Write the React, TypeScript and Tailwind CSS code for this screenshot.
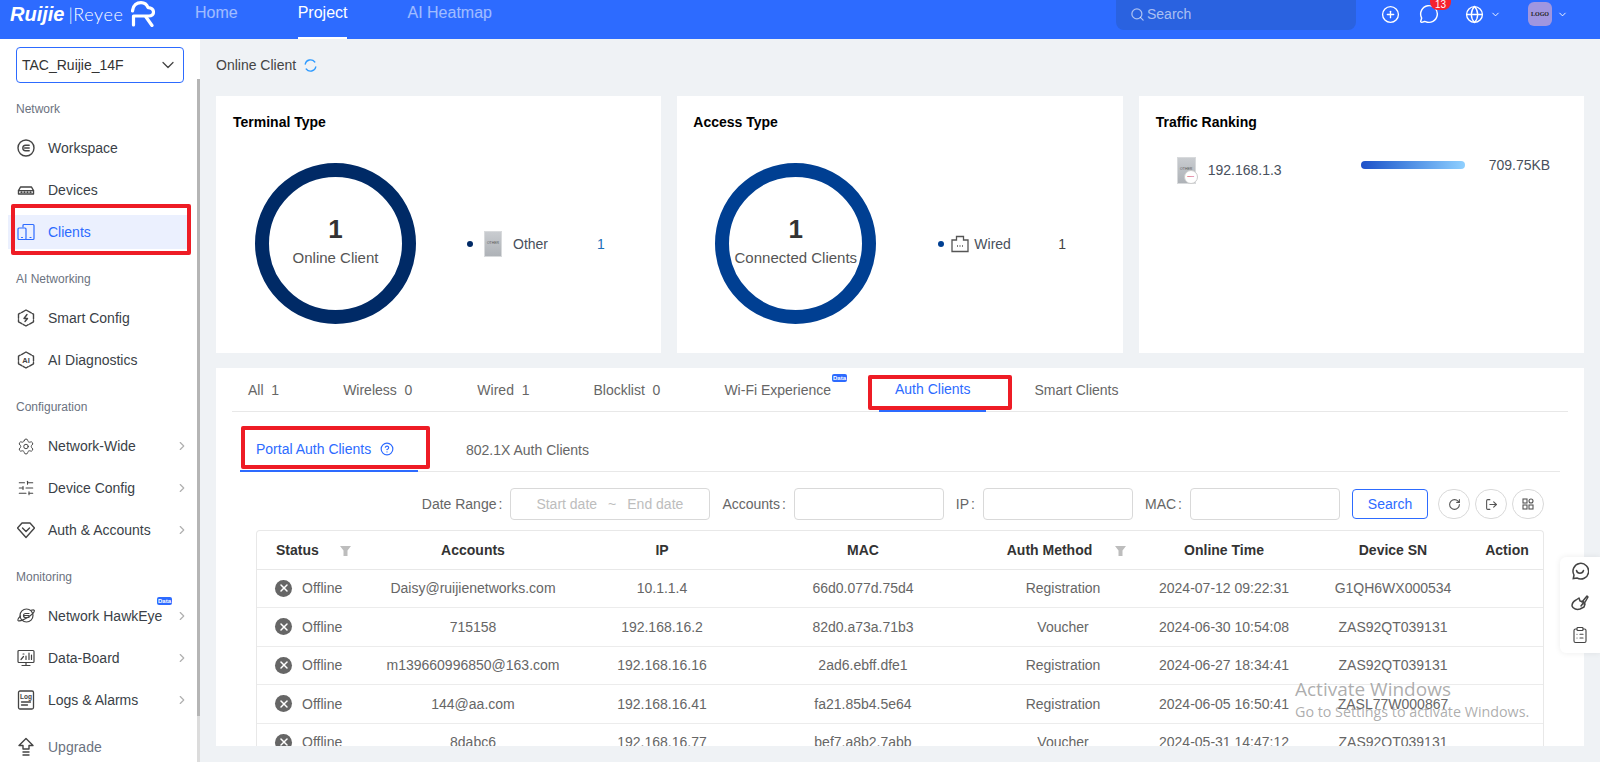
import React from "react";
import { ChevronDown, ChevronRight, CirclePlus, MessageCircle, Globe, Search, CircleHelp, Settings, SlidersHorizontal, RotateCw, LogOut, X, ClipboardList } from "lucide-react";

const stroke = { fill: "none", stroke: "currentColor", strokeWidth: 1.4, strokeLinecap: "round" as const, strokeLinejoin: "round" as const };

const IconWorkspace = () => (
  <svg width="18" height="18" viewBox="0 0 18 18" {...stroke}>
    <circle cx="9" cy="9" r="8" />
    <path d="M12.2 6.2H8.6a2.8 2.8 0 0 0 0 5.6h3.6M7.6 9h4.6" />
  </svg>
);
const IconDevices = () => (
  <svg width="18" height="18" viewBox="0 0 18 18" {...stroke}>
    <path d="M3.5 6h11l2 3.6V13H1.500V9.600z" />
    <path d="M1.500 9.600h15M4 11.300h1M7 11.300h1M10 11.300h1M13 11.300h1" />
  </svg>
);
const IconClients = () => (
  <svg width="18" height="18" viewBox="0 0 18 18" {...stroke} strokeWidth={1.2}>
    <path d="M6 4V2.500A1 1 0 0 1 7 1.500h9a1 1 0 0 1 1 1v13a1 1 0 0 1-1 1H9" />
    <rect x="1" y="5" width="8" height="11.500" rx="1" />
    <path d="M4.500 14.500h1M13 14.500h1" />
  </svg>
);
const IconSmart = () => (
  <svg width="18" height="18" viewBox="0 0 18 18" {...stroke}>
    <path d="M9 1 16.500 5.200v7.600L9 17 1.500 12.800V5.200z" strokeDasharray="6 1.400" />
    <path d="M10 5.500 7 9.500h3.500L8 12.500" />
  </svg>
);
const IconAI = () => (
  <svg width="18" height="18" viewBox="0 0 18 18" {...stroke}>
    <path d="M9 1 16.500 5.200v7.600L9 17 1.500 12.800V5.200z" strokeDasharray="6 1.400" />
    <text x="9" y="11.800" textAnchor="middle" fontSize="7.500" fontWeight="700" fill="currentColor" stroke="none" fontFamily="Liberation Sans">AI</text>
  </svg>
);
const IconAuth = () => (
  <svg width="18" height="18" viewBox="0 0 18 18" {...stroke}>
    <path d="M5 2h8l4.500 5L9 16.500.5 7z" />
    <path d="M5.500 7 9 10.500 12.500 7" />
  </svg>
);
const IconHawk = () => (
  <svg width="18" height="18" viewBox="0 0 18 18" {...stroke} strokeWidth={1.2}>
    <circle cx="9.500" cy="8.500" r="6.500" />
    <path d="M3.500 9C1.500 11 .5 12.500 1 13.300c.9 1.200 5.500-.2 10-3s7-5.800 6.200-7c-.4-.6-1.600-.6-3.200 0" />
    <path d="M12 6.500H8.500a2 2 0 0 0 0 4H12M7.500 8.500H12" />
  </svg>
);
const IconBoard = () => (
  <svg width="18" height="18" viewBox="0 0 18 18" {...stroke} strokeWidth={1.2}>
    <rect x="1" y="1.500" width="16" height="12" rx="1" />
    <path d="M9 13.500v3M5 16.500h8M4 10.500l2.500-3M6 5h1M9 10.500V7M12 10.500V4M14.500 10.500V6" />
  </svg>
);
const IconLogs = () => (
  <svg width="18" height="20" viewBox="0 0 18 20" {...stroke} strokeWidth={1.3}>
    <path d="M3 1h12a1.500 1.500 0 0 1 1.500 1.500v15A1.500 1.500 0 0 1 15 19H3a1.500 1.500 0 0 1-1.500-1.500v-15A1.500 1.500 0 0 1 3 1z" />
    <text x="9" y="9" textAnchor="middle" fontSize="6.500" fontWeight="700" fill="currentColor" stroke="none" fontFamily="Liberation Sans">Log</text>
    <path d="M4.500 12h9M4.500 15h6" />
  </svg>
);
const IconUpgrade = () => (
  <svg width="18" height="20" viewBox="0 0 18 20" {...stroke}>
    <path d="M9 1.500 16 8.500h-4V12H6V8.500H2z" />
    <path d="M6 15h6M6 18h6" />
  </svg>
);

const Sub = ({ children, className = "" }: { children: React.ReactNode; className?: string }) => (
  <div className={"h-4 leading-4 pl-4 text-xs text-[#6b7280] " + className}>{children}</div>
);

function Item({ icon, label, more, active, badge, muted }: { icon: React.ReactNode; label: string; more?: boolean; active?: boolean; badge?: boolean; muted?: boolean }) {
  return (
    <div className="h-[42px] flex items-center">
      <div className={"relative h-[34px] w-[179px] ml-2 pl-[9px] flex items-center " + (active ? "bg-[#ebf0fe] text-[#2d6bff]" : "text-[#3a3f47]")}>
        <span className={"w-[18px] flex justify-center " + (active ? "" : "text-[#444]")}>{icon}</span>
        <span className={"ml-[13px] text-sm " + (muted ? "text-[#6b7280]" : "")}>{label}</span>
        {more && <ChevronRight size={14} className="ml-auto mr-[-2px] text-[#b0b0b0]" />}
        {badge && <DataBadge className="left-[149px] top-[-2px]" />}
      </div>
    </div>
  );
}

const DataBadge = ({ className }: { className: string }) => (
  <span className={"absolute w-[15px] h-[8px] rounded-[2px] bg-[#2d6bff] text-white text-[6px] leading-[8px] font-bold text-center " + className}>Data</span>
);

const Thumb = ({ w, h, badge }: { w: string; h: string; badge?: boolean }) => (
  <div className={"relative shrink-0 bg-gradient-to-b from-[#c9ccd0] to-[#aeb2b7] border border-[#d8dadc] flex items-center justify-center " + w + " " + h}>
    <span className="text-[3.500px] leading-none text-[#555]">OTHER</span>
    {badge && (
      <span className="absolute right-[-3px] bottom-[-1px] w-[14px] h-[14px] rounded-full bg-white border border-[#ccc] flex items-center justify-center text-[2.500px] text-[#d0103a] font-bold">Ruijie</span>
    )}
  </div>
);

const Donut = ({ color, label }: { color: string; label: string }) => (
  <div className={"w-[161px] h-[161px] shrink-0 rounded-full border-[14px] flex flex-col items-center justify-center pb-2 text-[#333] " + color}>
    <div className="text-[26px] leading-[30px] font-bold">1</div>
    <div className="mt-[6px] text-[15px] leading-4 text-[#555] whitespace-nowrap">{label}</div>
  </div>
);

const Tab = ({ label, active, className = "", children }: { label: string; active?: boolean; className?: string; children?: React.ReactNode }) => (
  <div className={"relative h-[44px] px-4 flex items-center whitespace-pre text-sm " + (active ? "text-[#2d6bff] border-b-2 border-[#2d6bff] " : "text-[#666] ") + className}>
    {label}
    {children}
  </div>
);

const rows = [
  ["Daisy@ruijienetworks.com", "10.1.1.4", "66d0.077d.75d4", "Registration", "2024-07-12 09:22:31", "G1QH6WX000534"],
  ["715158", "192.168.16.2", "82d0.a73a.71b3", "Voucher", "2024-06-30 10:54:08", "ZAS92QT039131"],
  ["m139660996850@163.com", "192.168.16.16", "2ad6.ebff.dfe1", "Registration", "2024-06-27 18:34:41", "ZAS92QT039131"],
  ["144@aa.com", "192.168.16.41", "fa21.85b4.5e64", "Registration", "2024-06-05 16:50:41", "ZASL77W000867"],
  ["8dabc6", "192.168.16.77", "bef7.a8b2.7abb", "Voucher", "2024-05-31 14:47:12", "ZAS92QT039131"],
];

const Funnel = () => (
  <svg width="11" height="10" viewBox="0 0 11 10" className="inline-block">
    <path d="M0 0h11L7.500 4.500V10h-4V4.500z" fill="#bdbdbd" />
  </svg>
);

const Label = ({ text }: { text: string }) => (
  <span className="text-sm text-[#666] whitespace-pre">{text}<span className="ml-[2px]">:</span></span>
);

const Field = ({ label, w }: { label: string; w: string }) => (
  <>
    <span className="ml-3"><Label text={label} /></span>
    <div className={"ml-2 h-8 rounded border border-[#d9d9d9] bg-white " + w} />
  </>
);

const RoundBtn = ({ children, className = "ml-[5px]" }: { children: React.ReactNode; className?: string }) => (
  <div className={"w-8 h-[30px] rounded-full border border-[#d9d9d9] flex items-center justify-center text-[#555] " + className}>{children}</div>
);

export default function App() {
  return (
    <div className="relative h-[762px] w-[1600px] overflow-hidden flex flex-col bg-[#eff2f5] font-['Liberation_Sans',sans-serif]">
      <header className="h-[39px] shrink-0 bg-[#2d6bff] flex items-start text-white">
        <div className="w-[195px] h-[39px] pl-[10px] flex items-start shrink-0">
          <span className="mt-[2px] text-[20px] leading-6 font-bold italic">Ruijie</span>
          <span className="mt-[2px] ml-[4px] text-[18px] leading-6 font-light font-['Lato',sans-serif] tracking-[0.6px]">|Reyee</span>
          <svg width="24" height="26" viewBox="0 0 24 26" className="ml-[7px] mt-[1px]" fill="none" stroke="white" strokeWidth="3.200" strokeLinecap="round" strokeLinejoin="round">
            <path d="M1.500 10C2 4 6 1.600 10 1.600c3.500 0 6 2 7 5 3-.2 5.500 2 5.500 4.500S20.500 15 18 15H2.500v9" />
            <path d="M15 16l6 8.500" />
          </svg>
        </div>
        <nav className="flex gap-[60px] text-base">
          <span className="leading-[26px] text-white/55">Home</span>
          <span className="h-[39px] leading-[26px] border-b-2 border-white">Project</span>
          <span className="leading-[26px] text-white/55">AI Heatmap</span>
        </nav>
        <div className="ml-auto w-[240px] h-[30px] rounded-b-lg bg-[#2a62e0] flex items-center pl-[14px] pb-[2px] text-white/60 text-[14px]">
          <Search size={15} />
          <span className="ml-[2px]">Search</span>
        </div>
        <CirclePlus size={19} strokeWidth={1.700} className="ml-[25px] mt-[5px]" />
        <div className="relative ml-[19px] mt-[4px]">
          <MessageCircle size={20} strokeWidth={1.700} />
          <span className="absolute left-[11px] top-[-4px] w-[21px] h-[10px] rounded-b-lg bg-[#f5222d] text-[10px] leading-[9px] text-center">13</span>
        </div>
        <Globe size={19} strokeWidth={1.700} className="ml-[26px] mt-[5px]" />
        <ChevronDown size={11} className="ml-[6px] mt-[9px]" />
        <div className="ml-[27px] mt-[2px] w-6 h-6 rounded-md bg-[#a096e0] text-[#222] text-[6px] font-bold font-['Liberation_Serif',serif] flex items-center justify-center">LOGO</div>
        <ChevronDown size={11} className="ml-[5px] mt-[9px] mr-[32px]" />
      </header>

      <div className="flex-1 flex min-h-0">
        <aside className="relative w-[200px] shrink-0 bg-white overflow-hidden">
          <div className="absolute right-0 top-[40px] bottom-0 w-[3px] bg-[#dcdcdc]">
            <div className="h-[637px] bg-[#b5b5b5]" />
          </div>
          <div className="mt-2 ml-4 w-[168px] h-9 rounded border border-[#2d6bff] flex items-center pl-[5px] pr-[5px] text-sm text-[#333]">
            TAC_Ruijie_14F
            <ChevronDown size={20} strokeWidth={1.500} className="ml-auto text-[#444]" />
          </div>
          <Sub className="mt-[18px] mb-[10px]">Network</Sub>
          <Item icon={<IconWorkspace />} label="Workspace" />
          <Item icon={<IconDevices />} label="Devices" />
          <div className="relative">
            <Item icon={<IconClients />} label="Clients" active />
            <div className="absolute left-[11px] top-[-7px] w-[180px] h-[51px] border-4 border-[#ee1c25] rounded-[2px]" />
          </div>
          <Sub className="mt-[18px] mb-[10px]">AI Networking</Sub>
          <Item icon={<IconSmart />} label="Smart Config" />
          <Item icon={<IconAI />} label="AI Diagnostics" />
          <Sub className="mt-[18px] mb-[10px]">Configuration</Sub>
          <Item icon={<Settings size={21} strokeWidth={1.300} />} label="Network-Wide" more />
          <Item icon={<SlidersHorizontal size={20} strokeWidth={1.400} />} label="Device Config" more />
          <Item icon={<IconAuth />} label="Auth & Accounts" more />
          <Sub className="mt-[18px] mb-[10px]">Monitoring</Sub>
          <Item icon={<IconHawk />} label="Network HawkEye" more badge />
          <Item icon={<IconBoard />} label="Data-Board" more />
          <Item icon={<IconLogs />} label="Logs & Alarms" more />
          <div className="mt-[5px]"><Item icon={<IconUpgrade />} label="Upgrade" muted /></div>
        </aside>

        <main className="flex-1 min-w-0 px-4 flex flex-col">
          <div className="h-[57px] pb-[5px] shrink-0 flex items-center text-sm text-[#444]">
            Online Client
            <svg width="13" height="13" viewBox="0 0 13 13" className="ml-2 text-[#2f9bff]" fill="none" stroke="currentColor" strokeWidth="1.300" strokeLinecap="round">
              <path d="M1.200 5.200A5.400 5.400 0 0 1 10.800 3M11.800 7.800A5.400 5.400 0 0 1 2.200 10" />
            </svg>
          </div>

          <div className="grid grid-cols-3 gap-4 h-[257px] shrink-0">
            <section className="bg-white pt-[17px] px-[17px]">
              <h2 className="text-sm leading-[18px] font-bold text-black">Terminal Type</h2>
              <div className="mt-[32px] pl-[22px] flex items-center">
                <Donut color="border-[#002a66]" label="Online Client" />
                <span className="ml-[51px] w-[6px] h-[6px] rounded-full bg-[#002a66] shrink-0" />
                <Thumb w="w-[18px] ml-[11px]" h="h-[26px]" />
                <span className="ml-[11px] w-[84px] text-sm text-[#48505c]">Other</span>
                <span className="text-sm text-[#1d6fb8]">1</span>
              </div>
            </section>
            <section className="bg-white pt-[17px] px-[16px]">
              <h2 className="text-sm leading-[18px] font-bold text-black">Access Type</h2>
              <div className="mt-[32px] pl-[22px] flex items-center">
                <Donut color="border-[#003f92]" label="Connected Clients" />
                <span className="ml-[62px] w-[6px] h-[6px] rounded-full bg-[#003f92] shrink-0" />
                <svg width="18" height="18" viewBox="0 0 18 18" className="ml-[7px] text-[#555]" fill="none" stroke="currentColor" strokeWidth="1.300">
                  <path d="M5.500 5V1.500h7V5H17v11.500H1V5z" />
                  <path d="M6 11h1M8.500 11h1M11 11h1" strokeWidth="1.600" />
                </svg>
                <span className="ml-[5px] w-[84px] text-sm text-[#48505c]">Wired</span>
                <span className="text-sm text-[#444]">1</span>
              </div>
            </section>
            <section className="bg-white pt-[17px] px-[17px]">
              <h2 className="text-sm leading-[18px] font-bold text-black">Traffic Ranking</h2>
              <div className="mt-[24px] pl-[21px] flex items-center">
                <Thumb w="w-[19px]" h="h-[27px] mr-[6px]" badge />
                <span className="ml-[6px] w-[153px] text-sm text-[#48505c]">192.168.1.3</span>
                <div className="w-[104px] h-2 mb-[10px] rounded-full bg-gradient-to-r from-[#1e50c8] to-[#8fd0ff]" />
                <span className="ml-[24px] mb-[10px] text-sm text-[#48505c]">709.75KB</span>
              </div>
            </section>
          </div>

          <section className="mt-[15px] h-[378px] shrink-0 bg-white px-4 flex flex-col overflow-hidden">
            <div className="flex gap-8 border-b border-[#e8e8e8] h-[44px] shrink-0">
              <Tab label="All  1" />
              <Tab label="Wireless  0" />
              <Tab label="Wired  1" className="ml-px" />
              <Tab label="Blocklist  0" />
              <Tab label="Wi-Fi Experience"><DataBadge className="right-0 top-[6px]" /></Tab>
              <Tab label="Auth Clients" active>
                <div className="absolute left-[-11px] top-[7px] w-[144px] h-[35px] border-4 border-[#ee1c25] rounded-[2px]" />
              </Tab>
              <Tab label="Smart Clients" />
            </div>

            <div className="mx-2 mt-4 flex gap-8 border-b border-[#e8e8e8] h-[44px] shrink-0">
              <div className="relative h-[44px] w-[178px] px-4 flex items-center text-sm text-[#2d6bff] border-b-2 border-[#2d6bff]">
                Portal Auth Clients
                <CircleHelp size={14} className="ml-[9px]" />
                <div className="absolute left-[1px] top-[-2px] w-[189px] h-[43px] border-4 border-[#ee1c25] rounded-[2px]" />
              </div>
              <div className="h-[44px] px-4 flex items-center text-sm text-[#666]">802.1X Auth Clients</div>
            </div>

            <div className="mt-4 h-8 mr-6 shrink-0 flex items-center justify-end">
              <Label text="Date Range" />
              <div className="ml-2 w-[200px] h-8 rounded border border-[#d9d9d9] flex items-center pl-[25px] text-sm text-[#bdbdbd]">
                Start date<span className="mx-[11px]">~</span>End date
              </div>
              <Field label="Accounts" w="w-[150px]" />
              <Field label="IP" w="w-[150px]" />
              <Field label="MAC" w="w-[150px]" />
              <div className="ml-3 w-[76px] h-[30px] rounded border border-[#2d6bff] flex items-center justify-center text-sm text-[#2d6bff]">Search</div>
              <RoundBtn className="ml-[10px]"><RotateCw size={13} /></RoundBtn>
              <RoundBtn><LogOut size={13} /></RoundBtn>
              <RoundBtn>
                <svg width="12" height="12" viewBox="0 0 12 12" fill="none" stroke="currentColor" strokeWidth="1.100">
                  <rect x="1" y="1" width="4" height="4" /><circle cx="9" cy="3" r="2" /><rect x="1" y="7" width="4" height="4" /><rect x="7" y="7" width="4" height="4" />
                </svg>
              </RoundBtn>
            </div>

            <div className="mt-[10px] ml-6 w-[1288px] flex-1 min-h-0 overflow-hidden border border-b-0 border-[#e8e8e8] rounded-t">
              <table className="w-full table-fixed border-collapse text-sm">
                <colgroup>
                  <col className="w-[98px]" /><col className="w-[236px]" /><col className="w-[142px]" /><col className="w-[260px]" />
                  <col className="w-[140px]" /><col className="w-[182px]" /><col className="w-[156px]" /><col />
                </colgroup>
                <thead>
                  <tr className="h-[38px] border-b border-[#e8e8e8] text-[#333]">
                    <th className="font-bold text-left pl-[19px]">Status<span className="ml-[21px]"><Funnel /></span></th>
                    <th className="font-bold">Accounts</th>
                    <th className="font-bold">IP</th>
                    <th className="font-bold">MAC</th>
                    <th className="font-bold whitespace-nowrap pl-[7px]">Auth Method<span className="ml-[23px]"><Funnel /></span></th>
                    <th className="font-bold">Online Time</th>
                    <th className="font-bold">Device SN</th>
                    <th className="font-bold">Action</th>
                  </tr>
                </thead>
                <tbody>
                  {rows.map((r) => (
                    <tr key={r[0]} className="h-[38.500px] border-b border-[#ececec] text-[#666] text-center">
                      <td className="pl-[18px] text-left">
                        <span className="flex items-center">
                          <span className="w-[17px] h-[17px] rounded-full bg-[#666] flex items-center justify-center text-white"><X size={12} strokeWidth={3} /></span>
                          <span className="ml-[10px]">Offline</span>
                        </span>
                      </td>
                      {r.map((c) => <td key={c} className="whitespace-nowrap">{c}</td>)}
                      <td />
                    </tr>
                  ))}
                </tbody>
              </table>
            </div>
          </section>
        </main>
      </div>

      <div className="absolute right-0 top-[557px] w-10 h-24 bg-white rounded-l-md shadow-[0_0_6px_rgba(0,0,0,0.08)] flex flex-col items-center gap-[14px] pt-[5px] text-[#444]">
        <svg width="18" height="18" viewBox="0 0 18 18" fill="none" stroke="currentColor" strokeWidth="1.500" strokeLinecap="round">
          <path d="M2.300 16.500 3 13a7.800 7.800 0 1 1 3 3z" /><path d="M5.500 8.500c.8 3.500 6 3.500 7 0" />
        </svg>
        <svg width="18" height="18" viewBox="0 0 18 18" fill="none" stroke="currentColor" strokeWidth="1.500" strokeLinecap="round" strokeLinejoin="round">
          <path d="M1 12c0-3 2-5 4-6l3-2 1 3 4 1-3 4M1 12c1 3 5 4 8 3l4-2 1-3" /><path d="M11 8l5-6 1 1-4 7" />
        </svg>
        <ClipboardList size={18} strokeWidth={1.500} />
      </div>

      <div className="absolute left-[1295px] top-[677px] pointer-events-none text-[#8a8a8a]/70 font-['Open_Sans',sans-serif]">
        <div className="text-[19px] leading-6">Activate Windows</div>
        <div className="text-[14.300px] leading-[22px] whitespace-nowrap">Go to Settings to activate Windows.</div>
      </div>
    </div>
  );
}
